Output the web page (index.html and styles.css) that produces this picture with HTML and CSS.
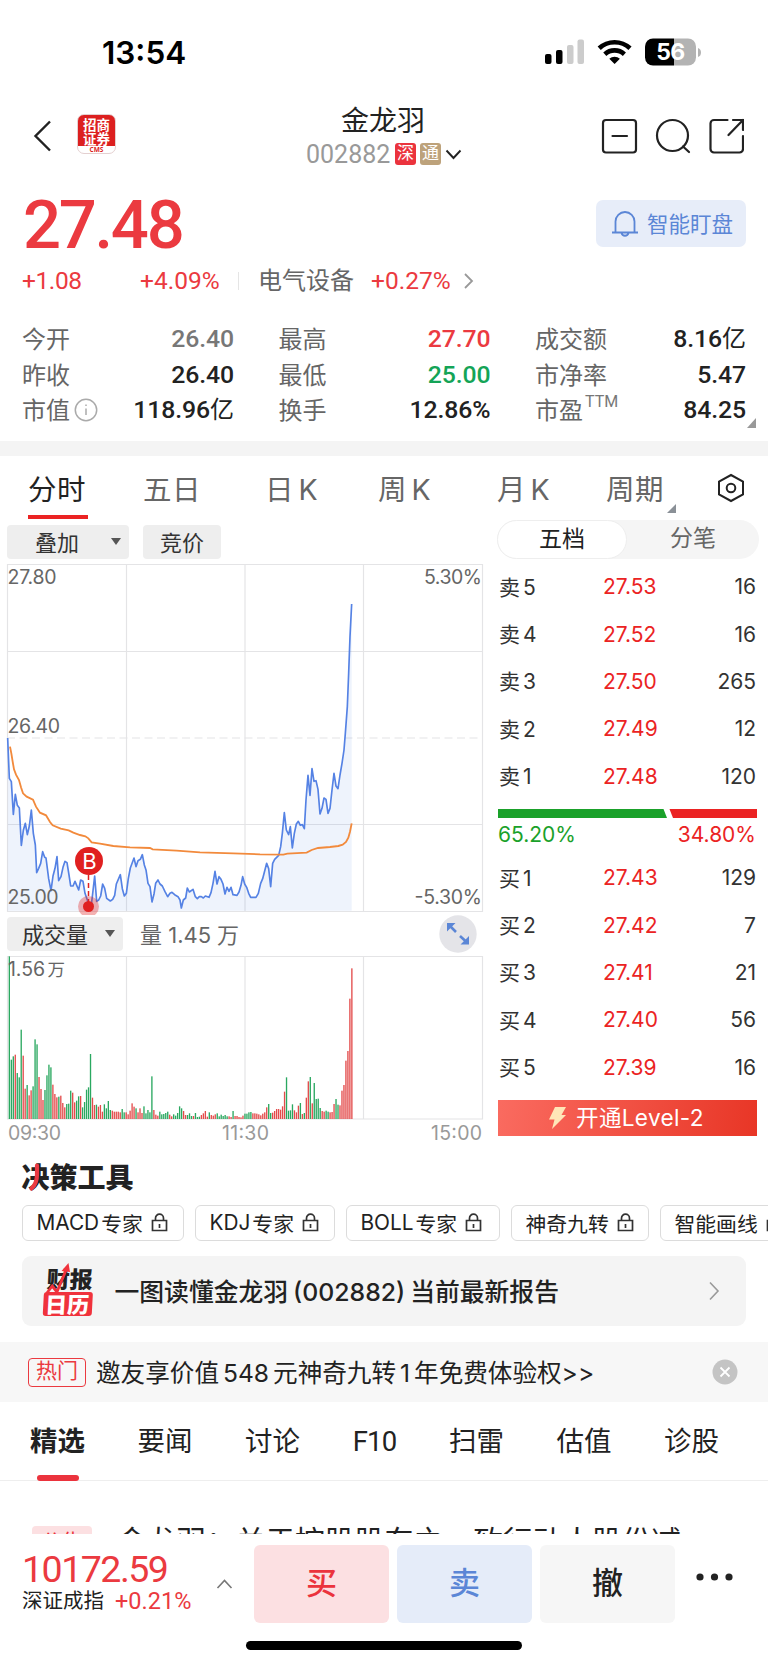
FILE: index.html
```html
<!DOCTYPE html>
<html lang="zh-CN">
<head>
<meta charset="utf-8">
<title>金龙羽 002882</title>
<link rel="stylesheet" href="styles.css">
</head>
<body>
<div class="screen">
  <div class="status">
    <span class="clock">13:54</span>
    <svg class="status-icons" width="160" height="28" viewBox="0 0 160 28">
      <rect x="3" y="16" width="6.500" height="10" rx="2"/><rect x="14" y="12" width="6.500" height="14" rx="2"/>
      <rect x="25" y="7" width="6.500" height="19" rx="2" fill="#ccc"/><rect x="35.500" y="1.500" width="6.500" height="24.500" rx="2" fill="#ccc"/>
      <g fill="none" stroke="#000" stroke-width="4.600"><path d="M57.200 10.300a22.500 22.500 0 0 1 30.800 0"/><path d="M62.800 16.200a14.500 14.500 0 0 1 19.600 0"/></g>
      <path d="M67.300 20.700a8 8 0 0 1 10.600 0L72.600 26z"/>
      <path d="M111 .5h21v27h-21a8 8 0 0 1-8-8v-11a8 8 0 0 1 8-8z"/><path d="M132 .5h14a8 8 0 0 1 8 8v11a8 8 0 0 1-8 8h-14z" fill="#b3b3b3"/>
      <path d="M156 10q3 1 3 4.500t-3 4.500z" fill="#b3b3b3"/>
      <text x="128.500" y="22" class="battery-text">56</text>
    </svg>
  </div>

  <header class="nav">
    <svg class="back" width="20" height="32" viewBox="0 0 20 32"><path d="M17 1.500 2.500 16 17 30.500"/></svg>
    <div class="broker"><span class="broker-name">招商</span><span class="broker-name">证券</span><span class="broker-tag">CMS</span></div>
    <div class="title">
      <div class="name">金龙羽</div>
      <div class="code"><span class="num">002882</span><span class="badge">深</span><span class="badge tan">通</span>
        <svg width="17" height="11" viewBox="0 0 17 11"><path d="M1.500 1.500 8.500 9l7-7.500" fill="none" stroke="#222" stroke-width="1.900"/></svg></div>
    </div>
    <svg class="nav-icons" width="144" height="38" viewBox="0 0 144 38">
      <rect x="3" y="3" width="33" height="32.500" rx="3"/><path d="M12.500 19H27"/>
      <circle cx="72.500" cy="18.500" r="15.500"/><path d="m83 29.500 6 5.500"/>
      <path d="M127.500 3H114a3.500 3.500 0 0 0-3.500 3.500v25.500a3.500 3.500 0 0 0 3.500 3.500h25.500a3.500 3.500 0 0 0 3.500-3.500V19M133 3h10v10M143 3 128.500 18"/>
    </svg>
  </header>

  <section class="quote">
    <div class="price-row"><div class="price">27.48</div>
      <div class="watch"><svg width="28" height="28" viewBox="0 0 28 28"><path d="M1 22.500h26M4.500 22.500V11.500a9.500 9.500 0 0 1 19 0v11M10.500 23a3.600 3.600 0 0 0 7 0"/></svg><span>智能盯盘</span></div></div>
    <div class="change"><span class="c1">+1.08</span><span class="c2">+4.09%</span><span class="sector">电气设备</span><span>+0.27%</span>
      <svg width="11" height="16" viewBox="0 0 11 16"><path d="m2 1 7 7-7 7" fill="none" stroke="#999" stroke-width="1.800"/></svg></div>
    <div class="stats">
      <div><label>今开</label><b class="gray">26.40</b></div><div><label>最高</label><b class="up">27.70</b></div><div><label>成交额</label><b>8.16<em>亿</em></b></div>
      <div><label>昨收</label><b>26.40</b></div><div><label>最低</label><b class="down">25.00</b></div><div><label>市净率</label><b>5.47</b></div>
      <div><label>市值</label><svg class="info" width="24" height="24" viewBox="0 0 24 24"><circle cx="12" cy="12" r="10.700"/><path d="M12 10.500v6.500M12 6.500v1.600"/></svg><b>118.96<em>亿</em></b></div><div><label>换手</label><b>12.86%</b></div><div><label>市盈</label><sup>TTM</sup><b>84.25</b></div>
      <i class="corner"></i>
    </div>
  </section>

  <nav class="periods">
    <span class="on">分时</span><span>五日</span><span>日 K</span><span>周 K</span><span>月 K</span><span class="more">周期</span>
    <svg width="28" height="30" viewBox="0 0 28 30"><path d="M14 2 26 8.500v13L14 28 2 21.500v-13z"/><circle cx="14" cy="15" r="4.300"/></svg>
  </nav>

  <main class="market">
    <div class="charts">
      <div class="tools"><span class="btn overlay">叠加<i></i></span><span class="btn">竞价</span></div>
      <svg class="chart-line" width="490" height="354" viewBox="0 0 490 354">
        <g class="grid"><path d="M7.500 3.500h475v347h-475zM126.500 3v347M245 3v347M363.500 3v347M7 90.500h476M7 263.500h476"/><path d="M7 177h476" stroke-dasharray="8 4.500"/></g>
        <g transform="translate(0 139) scale(.33333)">
          <polygon class="area"/>
          <polyline class="price-line"/>
          <polyline class="avg-line" points="30,140 34,160 38,185 42,208 48,224 57,240 63,262 69,280 80,290 99,299 108,320 120,338 138,346 150,366 158,376 182,386 206,391 220,398 240,405 256,409 265,415 275,427 300,431 340,438 390,442 450,444 458,448 530,452 600,457 700,460 780,463 850,464 862,461 920,458 935,450 954,444 990,441 1015,438 1028,434 1038,426 1045,413 1050,395 1055,370"/>
        </g>
        <path d="M88.500 314v28" stroke="#e02020" stroke-width="1.500" stroke-dasharray="5 3"/>
        <circle cx="88.500" cy="345.500" r="10.500" fill="#e02020" opacity=".35"/><circle cx="88.500" cy="345.500" r="5.500" fill="#e02020"/>
        <circle cx="89" cy="300" r="14" fill="#e02020"/><text x="89.500" y="307.500" class="mark">B</text>
        <g class="lbl"><text x="7.500" y="22.500" textLength="49">27.80</text><text x="424" y="22.500" textLength="58">5.30%</text><text x="7.500" y="171.500" textLength="52.500">26.40</text><text x="7.500" y="343" textLength="51">25.00</text><text x="414.500" y="343" textLength="67.500">-5.30%</text></g>
      </svg>
      <div class="vol-head"><span class="btn volume">成交量<i></i></span><span class="vol-text">量 1.45<em>万</em></span>
        <svg width="38" height="38" viewBox="0 0 38 38"><circle cx="19" cy="19" r="18.700" fill="#e4e4e8"/><g fill="#5b86d6" stroke="#5b86d6"><path d="M8 8h8.500L8 16.500zM30 29.500h-8.500L30 21z" stroke="none"/><path d="m11 11 6 6M27.500 27l-6.500-6" stroke-width="2.600"/></g></svg></div>
      <svg class="chart-vol" width="490" height="190" viewBox="0 0 490 190">
        <path class="grid" d="M7.500 3.500h475v162.500h-475zM126.500 3v163M245 3v163M363.500 3v163"/>
        <g id="bars" transform="translate(0 166) scale(.33333 -.33333)"></g>
        <g class="lbl"><text x="8" y="22.500" textLength="37">1.56</text><text x="47.500" y="22.500" font-size="17.500">万</text></g>
        <g class="lbl axis"><text x="8" y="186.500" textLength="53">09:30</text><text x="222" y="186.500" textLength="47">11:30</text><text x="431" y="186.500" textLength="51">15:00</text></g>
      </svg>
    </div>

    <aside class="book">
      <div class="seg"><span class="on">五档</span><span>分笔</span></div>
      <ul class="asks">
        <li><span>卖 5</span><em>27.53</em><b>16</b></li><li><span>卖 4</span><em>27.52</em><b>16</b></li><li><span>卖 3</span><em>27.50</em><b>265</b></li><li><span>卖 2</span><em>27.49</em><b>12</b></li><li><span>卖 1</span><em>27.48</em><b>120</b></li>
      </ul>
      <svg class="ratio" width="259" height="9" viewBox="0 0 259 9"><path d="M0 0h165.500l3.500 9H0z" fill="#1aa12a"/><path d="M171.500 0H259v9h-84z" fill="#eb2323"/></svg>
      <div class="pct"><span>65.20%</span><span class="r">34.80%</span></div>
      <ul>
        <li><span>买 1</span><em>27.43</em><b>129</b></li><li><span>买 2</span><em>27.42</em><b>7</b></li><li><span>买 3</span><em>27.41</em><b>21</b></li><li><span>买 4</span><em>27.40</em><b>56</b></li><li><span>买 5</span><em>27.39</em><b>16</b></li>
      </ul>
      <div class="level2"><svg width="19" height="22" viewBox="0 0 19 22"><path d="M7 0h11l-4.500 8H18L4 22l2.500-9.500H1z" fill="#ffe6b8"/></svg><span>开通Level-2</span></div>
    </aside>
  </main>

  <section class="decision">
    <h2>决策工具<svg width="14" height="29" viewBox="0 0 14 29"><path d="M10 2.500v9q0 9-5.500 14" fill="none" stroke="#eb3a43" stroke-width="4.200" stroke-linecap="round"/></svg></h2>
    <div class="chips">
      <span class="w1"><em>MACD</em>专家<svg class="lock" viewBox="0 0 17 19"><path d="M1.500 7.500h14v10h-14zM4.500 7.500V5.200a4 4 0 0 1 8 0v2.300M8.500 11v4"/></svg></span>
      <span class="w2"><em>KDJ</em>专家<svg class="lock" viewBox="0 0 17 19"><path d="M1.500 7.500h14v10h-14zM4.500 7.500V5.200a4 4 0 0 1 8 0v2.300M8.500 11v4"/></svg></span>
      <span class="w3"><em>BOLL</em>专家<svg class="lock" viewBox="0 0 17 19"><path d="M1.500 7.500h14v10h-14zM4.500 7.500V5.200a4 4 0 0 1 8 0v2.300M8.500 11v4"/></svg></span>
      <span class="w4">神奇九转<svg class="lock" viewBox="0 0 17 19"><path d="M1.500 7.500h14v10h-14zM4.500 7.500V5.200a4 4 0 0 1 8 0v2.300M8.500 11v4"/></svg></span>
      <span class="w5">智能画线<svg class="lock" viewBox="0 0 17 19"><path d="M1.500 7.500h14v10h-14zM4.500 7.500V5.200a4 4 0 0 1 8 0v2.300M8.500 11v4"/></svg></span>
    </div>
    <div class="report">
      <div class="cal"><span>财报</span><span class="red">日历</span><svg width="25" height="34" viewBox="0 0 25 34"><path d="m2 31 5-7 5 6L20 8" fill="none" stroke="#f0323c" stroke-width="2.800"/><path d="m15.500 9 6.500-8 2 9z" fill="#f0323c"/></svg></div>
      <div class="report-text">一图读懂金龙羽<span>(002882)</span>当前最新报告</div>
      <svg width="12" height="20" viewBox="0 0 12 20"><path d="m2 1.500 8 8.500-8 8.500" fill="none" stroke="#999" stroke-width="1.600"/></svg>
    </div>
  </section>

  <div class="promo"><span class="hot">热门</span><span class="promo-text">邀友享价值<em>548</em>元神奇九转<em>1</em>年免费体验权&gt;&gt;</span>
    <svg width="26" height="26" viewBox="0 0 26 26"><circle cx="13" cy="13" r="12.500" fill="#c4c4c4"/><path d="m8.500 8.500 9 9m0-9-9 9" stroke="#fff" stroke-width="1.800"/></svg></div>

  <nav class="news-tabs"><span class="on">精选</span><span>要闻</span><span>讨论</span><span class="f10">F10</span><span>扫雷</span><span>估值</span><span>诊股</span></nav>
  <div class="news"><span class="notice">公告</span><span class="headline">金龙羽：关于控股股东之一致行动人股份减</span></div>

  <footer class="trade">
    <div class="index"><div class="index-num">10172.59</div><div class="index-sub">深证成指<em>+0.21%</em></div></div>
    <svg class="caret" width="17" height="10" viewBox="0 0 17 10"><path d="m1.500 9 7-7.500 7 7.500" fill="none" stroke="#777" stroke-width="1.600"/></svg>
    <div class="act buy">买</div><div class="act sell">卖</div><div class="act cancel">撤</div>
    <svg class="dots" width="38" height="10" viewBox="0 0 38 10"><circle cx="5" cy="5" r="3.600"/><circle cx="19.500" cy="5" r="3.600"/><circle cx="34" cy="5" r="3.600"/></svg>
  </footer>
  <div class="home"></div>
</div>
<script src="script.js"></script>
</body>
</html>
```
FILE: styles.css
```css
* { box-sizing: border-box; }
body { margin: 0; background: #fff; color: #222; font-family: Roboto, "Noto Sans CJK SC", sans-serif; }
em, b, i, label { font-style: normal; font-weight: inherit; }
ul, h2 { margin: 0; padding: 0; list-style: none; }
svg { display: block; flex: none; }
.screen { width: 768px; height: 1665px; overflow: hidden; display: flex; flex-direction: column; white-space: nowrap; }
.screen > * { flex: none; }

.status { height: 92px; display: flex; justify-content: space-between; padding: 38px 66px 0 102px; }
.clock { font: 600 31.500px/29px Inter, sans-serif; color: #000; }
.battery-text { font: 700 23px Inter, sans-serif; fill: #fff; text-anchor: middle; letter-spacing: -.5px; }

.nav { height: 92px; position: relative; display: flex; padding-left: 33px; }
.back { margin-top: 28px; fill: none; stroke: #222; stroke-width: 2.400; }
.broker { margin: 22px 0 0 24px; width: 39px; height: 40px; border-radius: 7px; background: linear-gradient(#dc1f1f 31px, #fff 31px); overflow: hidden; border: 1px solid #e4d0d0; text-align: center; }
.broker-name { display: block; height: 14px; font: 700 13.500px/14px "Noto Sans CJK SC", sans-serif; color: #fff; }
.broker-name:first-child { margin-top: 2px; }
.broker-tag { display: block; height: 8px; margin-top: 1px; color: #dc1f1f; font: 700 6.500px/8px "Open Sans", sans-serif; }
.title { margin-left: 190px; width: 190px; }
.name { height: 54px; padding: 12px 0 0 35px; font-size: 28px; line-height: 36px; }
.code { display: flex; align-items: center; height: 24px; margin-top: -4px; font-size: 25px; color: #999; }
.code .num { width: 89px; }
.badge { width: 21px; height: 22px; border-radius: 3px; background: #eb333d; color: #fff; font-size: 17px; line-height: 21px; text-align: center; margin-right: 4px; }
.tan { background: #bda27b; margin-right: 4px; }
.nav-icons { position: absolute; left: 600px; top: 25px; fill: none; stroke: #222; stroke-width: 2.200; stroke-linecap: round; }

.quote { height: 257px; padding: 16px 22px 0 22px; }
.price-row { display: flex; justify-content: space-between; height: 72px; color: #eb3a40; }
.price { font-size: 67px; font-weight: 500; line-height: 50px; letter-spacing: -2.300px; padding-left: 1px; }
.watch { width: 150px; height: 47px; border-radius: 7px; background: #e7edf9; color: #5b86d6; font-size: 21.500px; display: flex; align-items: center; padding-left: 15px; gap: 8px; }
.watch svg { fill: none; stroke: #5b86d6; stroke-width: 1.800; }
.watch span { padding-bottom: 3px; }
.change { display: flex; align-items: center; height: 18px; font-size: 24.500px; line-height: 18px; color: #eb3a40; }
.c1 { width: 118px; letter-spacing: -.4px; }
.c2 { width: 99px; border-right: 1px solid #e5e5e5; }
.sector { color: #666; font-size: 24px; margin: 0 17px 0 19px; }
.change svg { margin-left: 12px; }
.stats { position: relative; display: grid; grid-template-columns: 212px 212px 211px; column-gap: 44.500px; grid-auto-rows: 35.700px; margin-top: 31px; font-size: 24.800px; }
.stats > div { display: flex; align-items: center; height: 36px; }
.stats label { color: #666; font-size: 24px; padding-bottom: 3px; }
.stats b { margin-left: auto; font-weight: 500; line-height: 30px; letter-spacing: -.1px; }
.stats b em { font-size: 24px; font-weight: 400; }
.stats .gray { color: #777; }
.up { color: #eb3a40; }
.down { color: #14a457; }
.info { margin-left: 4px; fill: none; stroke: #aaa; stroke-width: 1.500; }
.stats sup { font-size: 16px; line-height: 16px; margin: -17px 0 0 2px; color: #777; vertical-align: baseline; }
.corner { position: absolute; right: -10px; bottom: 0; border-left: 9px solid transparent; border-bottom: 10px solid #999; }

.periods { border-top: 15px solid #f4f4f4; height: 79px; display: flex; padding-left: 28px; font: 28.500px/33px Inter, "Noto Sans CJK SC", sans-serif; color: #666; }
.periods span { padding-top: 17px; height: 63px; letter-spacing: .5px; word-spacing: -4px; width: 60px; margin-right: 57px; }
.periods .on { color: #222; border-bottom: 4px solid #eb2323; margin-right: 55px; }
.periods span:nth-child(2) { margin-right: 62px; }
.periods span:nth-child(3) { margin-right: 53px; }
.periods span:nth-child(4) { margin-right: 59px; }
.periods span:nth-child(5) { margin-right: 49px; }
.periods .more { position: relative; margin-right: 51px; }
.more::after { content: ""; position: absolute; right: -10px; top: 48px; border-left: 9px solid transparent; border-bottom: 9px solid #8a9097; }
.periods svg { margin-top: 17px; fill: none; stroke: #222; stroke-width: 2; }

.market { display: flex; height: 630px; font-family: Inter, "Noto Sans CJK SC", sans-serif; }
.charts { width: 490px; }
.tools { height: 41px; padding: 5px 0 0 7px; display: flex; align-items: flex-start; gap: 14px; }
.btn { display: flex; align-items: center; height: 34px; padding: 0 17px 2px; border-radius: 4px; background: #eee; color: #333; font-size: 22px; }
.btn i { border: 5px solid transparent; border-top: 7px solid #555; border-bottom: 0; }
.overlay { width: 122px; padding-left: 28px; }
.overlay i { margin-left: 32px; }
.grid { fill: none; stroke: #e4e4e6; stroke-width: 1.200; }
.area { fill: #5b86e6; opacity: .1; }
.price-line { fill: none; stroke: #5582e4; stroke-width: 5; stroke-linejoin: round; }
.avg-line { fill: none; stroke: #f28a3c; stroke-width: 5.500; }
.lbl { font: 19.500px Inter, "Noto Sans CJK SC", sans-serif; fill: #666; }
.axis { fill: #999; }
.mark { font: 22px Inter, sans-serif; fill: #fff; text-anchor: middle; }
.vol-head { height: 38px; display: flex; align-items: center; padding-left: 7px; }
.volume { width: 116px; padding: 0 0 2px 15px; }
.volume i { margin-left: 17px; }
.vol-text { margin-left: 17px; width: 100px; padding-bottom: 2px; font-size: 22px; color: #666; }
.vol-text em { margin-left: 6px; font-size: 22px; }
.vol-head svg { margin-left: 199px; }

.book { margin-left: 7px; width: 262px; font-size: 21px; }
.seg { height: 39px; border-radius: 20px; background: #f5f5f5; display: flex; font-size: 23px; line-height: 36px; text-align: center; color: #666; }
.seg span { flex: 1; }
.seg .on { flex: none; width: 130px; border: 1px solid #eee; border-radius: 20px; background: #fff; color: #222; }
.book li { display: flex; align-items: center; height: 47.400px; padding: 0 1px 0 2px; width: 260px; }
.book li span { width: 85px; padding-bottom: 2px; font-size: 21px; color: #333; word-spacing: -3px; }
.book li em { width: 90px; margin-left: -5px; padding-left: 24px; color: #eb2323; }
.book li b { margin-left: auto; color: #333; }
.asks { margin-top: 4px; }
.ratio { margin: 9px 0 0 1px; }
.pct { display: flex; justify-content: space-between; width: 258px; margin-left: 1px; height: 36px; line-height: 33px; color: #1aa12a; }
.pct .r { color: #eb2323; }
.level2 { margin: 9px 0 0 1px; width: 259px; height: 36px; display: flex; align-items: center; padding-left: 50px; background: linear-gradient(100deg, #fa6b60, #e83626); color: #fff; font-size: 22.600px; letter-spacing: .3px; }
.level2 svg { margin-right: 9px; }
.level2 span { padding-bottom: 2px; }

.decision { height: 192px; padding-left: 21.500px; }
h2 { position: relative; height: 55px; line-height: 53px; font-size: 28px; font-weight: 900; font-family: "Noto Sans CJK SC", sans-serif; }
h2 svg { position: absolute; left: 5px; top: 13px; }
.chips { display: flex; gap: 11px; width: 746px; overflow: hidden; }
.chips > span { flex: none; display: flex; align-items: center; height: 36px; padding: 0 0 1px 14px; border: 1px solid #dcdcdc; border-radius: 6px; font: 20.800px Inter, "Noto Sans CJK SC", sans-serif; }
.chips em { margin-right: 2px; }
.lock { width: 17px; height: 19px; margin-left: 8px; fill: none; stroke: #333; stroke-width: 1.700; }
.w1 { width: 162px; } .w2 { width: 140px; } .w3 { width: 154px; } .w4 { width: 138px; } .w5 { width: 140px; }
.report { display: flex; align-items: center; margin-top: 15px; width: 724px; height: 70px; border-radius: 9px; background: #f4f4f4; padding: 0 26px 0 22px; }
.cal { position: relative; width: 49px; font: 900 23px/24px "Noto Sans CJK SC", sans-serif; transform: skewX(-3deg); }
.cal span { display: block; height: 26px; padding-left: 2px; }
.cal .red { height: 24px; background: #f0323c; color: #fff; border-radius: 3px; line-height: 22px; font-size: 22px; }
.cal svg { position: absolute; left: 1px; top: -4px; }
.report-text { margin-left: 22px; padding-bottom: 2px; font: 500 24.800px Inter, "Noto Sans CJK SC", sans-serif; flex: 1; }
.report-text span { margin: 0 5px; }

.promo { height: 60px; background: #f7f7f7; display: flex; align-items: center; padding: 0 30px 0 28px; }
.hot { width: 58px; height: 29px; border: 1.500px solid #eb3a40; border-radius: 4px; color: #eb3a40; font-size: 21px; line-height: 25px; text-align: center; }
.promo-text { flex: 1; margin-left: 10px; padding-bottom: 2px; font: 24.600px Inter, "Noto Sans CJK SC", sans-serif; }
.promo-text em { margin: 0 4px; }

.news-tabs { height: 79px; border-bottom: 1px solid #eee; display: flex; padding: 0 22px 0 30px; gap: 52.500px; font-size: 27.500px; line-height: 80px; }
.news-tabs span { position: relative; width: 55px; height: 79px; text-align: center; }
.news-tabs .f10 { width: 44px; letter-spacing: -.8px; }
.news-tabs .on { font-weight: 700; }
.news-tabs .on::after { content: ""; position: absolute; left: 7px; bottom: 0; width: 42px; height: 6px; border-radius: 3px; background: #eb333d; }
.news { height: 53px; padding: 45px 0 0 32px; overflow: hidden; display: flex; }
.notice { width: 60px; height: 32px; border-radius: 4px; background: #fce0e2; color: #eb333d; font-size: 21px; line-height: 32px; text-align: center; }
.headline { margin-left: 25px; font-size: 29.700px; line-height: 32px; }

.trade { height: 97px; display: flex; padding: 11px 0 0 22px; }
.index { width: 194px; color: #eb3a40; }
.index-num { margin-top: 10px; font-size: 37.500px; line-height: 28px; letter-spacing: -1.500px; }
.index-sub { margin-top: 5px; font-size: 20.500px; line-height: 26px; color: #222; display: flex; align-items: center; }
.index-sub em { margin-left: 11px; font-size: 23.500px; color: #eb3a40; }
.caret { margin: 34px 21px 0 0; }
.act { width: 135px; height: 78px; margin-right: 8px; border-radius: 6px; font-size: 31px; font-weight: 500; line-height: 77px; text-align: center; }
.buy { background: #fce0e2; color: #eb333d; }
.sell { background: #e5ecf9; color: #5b86d6; }
.cancel { background: #f6f6f6; }
.dots { margin: 27px 0 0 12px; fill: #222; }
.home { width: 276px; height: 9px; margin: 10px auto 0; border-radius: 5px; background: #000; }
```
FILE: script.js
```js
// One entry per traded minute: r = up, g = down, followed by the bar height.
const volumes = "g488 g178 g188 r193 g138 g125 g268 r190 r91 g102 r71 r86 g98 g239 g224 r126 r90 r57 g87 g131 g163 g155 r103 r75 r65 g67 r70 r48 r35 g45 g46 g85 r79 r50 g55 g68 r69 g35 g51 g88 g95 g195 r64 r42 g43 r37 r42 r22 g44 g32 g54 g27 r25 r22 r22 r22 r20 g30 g20 r20 r14 r25 r47 r37 g32 r20 r32 r18 g38 g17 g27 g20 g128 r27 r13 r10 g22 g14 g15 g18 g22 r13 r8 g14 g10 g18 g38 g32 r24 r12 g12 g17 g9 r9 g18 g6 g7 r12 r17 r24 r7 g20 r12 r10 r14 g17 g8 g13 g9 g12 g8 r8 r6 g24 r9 r9 r6 r5 r10 g16 g16 g20 g21 r17 r17 r16 r14 r11 r16 r20 r35 g45 g18 r19 r24 r30 r30 r28 r38 r82 g125 g25 g26 g44 r26 r20 r40 g48 r15 g18 r64 r113 g126 r47 g108 g60 g61 g33 r24 r22 g25 g22 r20 r21 r45 g60 g43 r41 r85 r102 r175 r204 r361 r452".split(" ");
const NS = "http://www.w3.org/2000/svg";
const bars = document.getElementById("bars");
volumes.forEach((v, i) => {
  const r = document.createElementNS(NS, "rect");
  r.setAttribute("x", 26 + i * 5.94);
  r.setAttribute("y", 0);
  r.setAttribute("width", 4);
  r.setAttribute("height", v.slice(1));
  r.setAttribute("fill", v[0] === "r" ? "#e34b4b" : "#2aa860");
  bars.appendChild(r);
});

// Intraday price points, shared by the line and the shaded area below it.
const price = "23,114 28,235 34,245 40,343 46,283 52,316 58,324 64,436 70,391 76,370 82,404 88,378 94,330 100,400 106,435 110,518 116,505 122,490 128,455 134,472 138,474 146,536 153,572 159,528 165,505 171,470 176,542 183,530 189,502 195,484 201,488 207,525 212,558 219,558 225,544 236,570 242,540 249,544 255,580 262,600 272,630 277,590 284,528 290,604 296,600 302,588 308,552 314,565 320,595 331,603 338,598 344,586 349,552 361,524 367,566 373,588 379,580 385,535 391,504 402,474 408,500 414,482 421,478 427,464 433,495 438,510 444,550 450,560 456,606 462,582 467,550 474,540 480,552 487,558 495,575 503,590 510,580 516,577 524,584 534,590 540,600 544,624 550,600 557,594 562,564 568,576 579,568 586,590 592,596 598,590 604,590 610,594 616,588 627,592 633,578 639,550 645,514 651,552 657,530 663,538 669,552 675,582 681,562 687,574 693,562 699,584 711,586 717,576 723,556 728,530 734,552 740,562 746,580 752,592 768,592 775,580 782,550 788,536 800,490 806,506 812,560 818,490 824,478 836,466 842,440 847,400 853,338 859,390 866,404 871,380 877,444 883,400 889,372 895,364 901,376 907,374 913,386 918,300 924,226 930,286 936,206 942,244 948,242 954,268 960,342 966,325 972,294 978,298 984,340 990,325 996,270 1002,220 1008,258 1014,266 1020,225 1026,190 1032,150 1036,100 1042,20 1046,-80 1050,-190 1055,-288";
document.querySelector(".price-line").setAttribute("points", price);
document.querySelector(".area").setAttribute("points", price + " 1055,632 23,632");
```
